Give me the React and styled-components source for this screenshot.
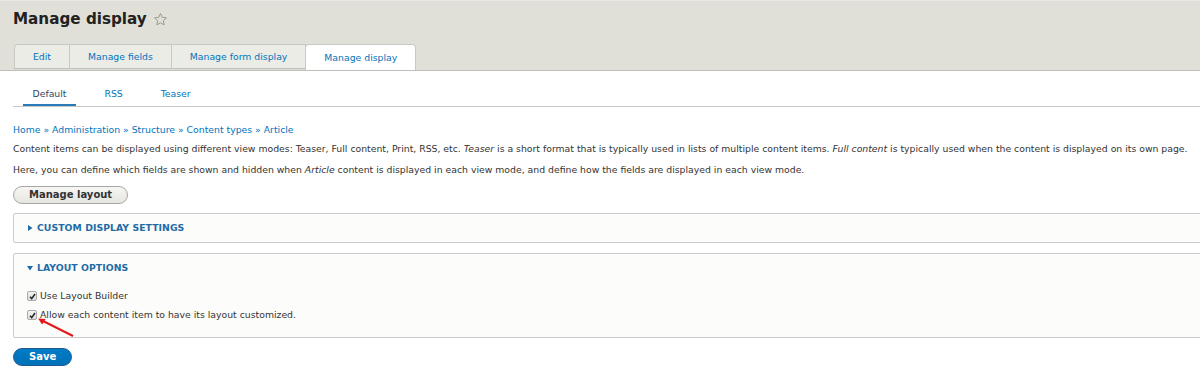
import React from 'react';
import styled, { createGlobalStyle } from 'styled-components';

const GlobalStyle = createGlobalStyle`
  html, body {
    margin: 0;
    padding: 0;
    background: #fff;
    overflow: hidden;
  }
  body {
    font-family: "DejaVu Sans", Verdana, sans-serif;
    color: #333;
    font-size: 9.3px;
  }
`;

const Header = styled.header`
  background: #e0e0d8;
  border-top: 1px solid #e8e8e2;
  border-bottom: 1px solid #bfbfba;
  padding: 9px 0 0 13px;
  height: 60px;
`;

const TitleRow = styled.div`
  display: flex;
  align-items: center;
  gap: 6px;
  height: 18px;
`;

const Title = styled.h1`
  margin: 0;
  font-size: 15.2px;
  font-weight: bold;
  color: #222;
  line-height: 18px;
`;

const Tabs = styled.nav`
  display: flex;
  margin: 16px 0 0 1px;
  height: 25px;
`;

const Tab = styled.a`
  display: flex;
  align-items: center;
  padding: 0 18px;
  height: ${p => (p.$active ? '26px' : '25px')};
  box-sizing: border-box;
  background: ${p => (p.$active ? '#fff' : '#ecece7')};
  border: 1px solid #c9c9c3;
  border-bottom: ${p => (p.$active ? 'none' : '1px solid #bfbfba')};
  margin-left: -1px;
  color: #0074bd;
  text-decoration: none;
  border-radius: ${p => (p.$active ? '4px 4px 0 0' : p.$first ? '4px 0 0 0' : '0')};
  &:first-child {
    margin-left: 0;
  }
`;

const Main = styled.main`
  padding: 0 0 0 13px;
  width: 1230px;
  box-sizing: border-box;
`;

const SubTabs = styled.nav`
  display: flex;
  gap: 19px;
  margin-top: 13px;
  padding-left: 10px;
  border-bottom: 1px solid #c8c8c8;
`;

const SubTab = styled.a`
  display: block;
  padding: 0 9.5px;
  line-height: 20px;
  color: ${p => (p.$active ? '#2c4a62' : '#0074bd')};
  border-bottom: 2px solid ${p => (p.$active ? '#2a7ab8' : 'transparent')};
  text-decoration: none;
`;

const Breadcrumb = styled.div`
  margin-top: 16px;
  line-height: 14px;
  color: #0074bd;
  a {
    color: #0074bd;
    text-decoration: none;
  }
`;

const Para = styled.p`
  margin: ${p => p.$mt}px 0 0;
  line-height: 14px;
  color: #333;
`;

const PillButton = styled.button`
  display: block;
  height: 18px;
  padding: 0 15px;
  border-radius: 20px;
  font-family: "DejaVu Sans", Verdana, sans-serif;
  font-weight: bold;
  font-size: 10px;
  line-height: 16px;
  cursor: pointer;
  margin-top: ${p => p.$mt}px;
  border: 1px solid ${p => (p.$primary ? '#1e5c90' : '#a6a6a6')};
  color: ${p => (p.$primary ? '#fff' : '#333')};
  background: ${p =>
    p.$primary
      ? 'linear-gradient(#007bc6, #0071b8)'
      : 'linear-gradient(#f6f6f3, #e6e6e1)'};
`;

const Details = styled.section`
  margin-top: ${p => p.$mt}px;
  background: #fcfcfa;
  border: 1px solid #cccccc;
  border-radius: 2px;
  padding: 7px 0 ${p => (p.$open ? '15px' : '7px')} 13px;
  position: relative;
`;

const Summary = styled.div`
  display: flex;
  align-items: center;
  gap: 4px;
  line-height: 14px;
  font-weight: bold;
  text-transform: uppercase;
  color: #1f6ba6;
  letter-spacing: 0.05px;
`;

const Options = styled.div`
  display: flex;
  flex-direction: column;
  gap: 5px;
  margin-top: 14px;
`;

const CheckRow = styled.label`
  display: flex;
  align-items: center;
  gap: 3px;
  line-height: 14px;
  color: #333;
`;

const Box = styled.span`
  width: 8px;
  height: 8px;
  border: 1px solid #a9a9a9;
  border-radius: 2px;
  background: linear-gradient(#f4f4f4, #dcdcdc);
  display: flex;
  align-items: center;
  justify-content: center;
`;

const Arrow = styled.svg`
  position: absolute;
  left: 22px;
  top: 62px;
  pointer-events: none;
`;

const Star = () => (
  <svg width="15" height="15" viewBox="0 0 24 24" fill="none" stroke="#9a9a94" strokeWidth="1.6" strokeLinejoin="round">
    <path d="M12 2.5l2.9 6.1 6.6.8-4.9 4.6 1.3 6.6L12 17.3l-5.9 3.3 1.3-6.6-4.9-4.6 6.6-.8z" />
  </svg>
);

const Caret = ({ open }) => (
  <svg width="6" height="6" viewBox="0 0 6 6">
    {open ? <path d="M0 1h6L3 5.5z" fill="#1f6ba6" /> : <path d="M1 0l4.5 3L1 6z" fill="#1f6ba6" />}
  </svg>
);

const Check = () => (
  <svg width="7" height="7" viewBox="0 0 7 7">
    <path d="M1 3.8l1.7 1.8L6 1" fill="none" stroke="#222" strokeWidth="1.5" />
  </svg>
);

const Checkbox = ({ label }) => (
  <CheckRow>
    <Box><Check /></Box>
    {label}
  </CheckRow>
);

export default function App() {
  return (
    <>
      <GlobalStyle />
      <Header>
        <TitleRow>
          <Title>Manage display</Title>
          <Star />
        </TitleRow>
        <Tabs>
          <Tab $first>Edit</Tab>
          <Tab>Manage fields</Tab>
          <Tab>Manage form display</Tab>
          <Tab $active>Manage display</Tab>
        </Tabs>
      </Header>
      <Main>
        <SubTabs>
          <SubTab $active>Default</SubTab>
          <SubTab>RSS</SubTab>
          <SubTab>Teaser</SubTab>
        </SubTabs>
        <Breadcrumb>
          <a>Home</a> » <a>Administration</a> » <a>Structure</a> » <a>Content types</a> » <a>Article</a>
        </Breadcrumb>
        <Para $mt={5}>
          Content items can be displayed using different view modes: Teaser, Full content, Print, RSS, etc. <em>Teaser</em> is a short format that is typically used in lists of multiple content items. <em>Full content</em> is typically used when the content is displayed on its own page.
        </Para>
        <Para $mt={7}>
          Here, you can define which fields are shown and hidden when <em>Article</em> content is displayed in each view mode, and define how the fields are displayed in each view mode.
        </Para>
        <PillButton $mt={9}>Manage layout</PillButton>
        <Details $mt={9}>
          <Summary><Caret />Custom display settings</Summary>
        </Details>
        <Details $mt={10} $open>
          <Summary><Caret open />Layout options</Summary>
          <Options>
            <Checkbox label="Use Layout Builder" />
            <Checkbox label="Allow each content item to have its layout customized." />
          </Options>
          <Arrow width="40" height="24" viewBox="0 0 40 24">
            <path d="M37 20L5 4" stroke="#e3161b" strokeWidth="2" fill="none" />
            <path d="M2 2.5l7.5 0.6-3.3 5.4z" fill="#e3161b" />
          </Arrow>
        </Details>
        <PillButton $primary $mt={10}>Save</PillButton>
      </Main>
    </>
  );
}
